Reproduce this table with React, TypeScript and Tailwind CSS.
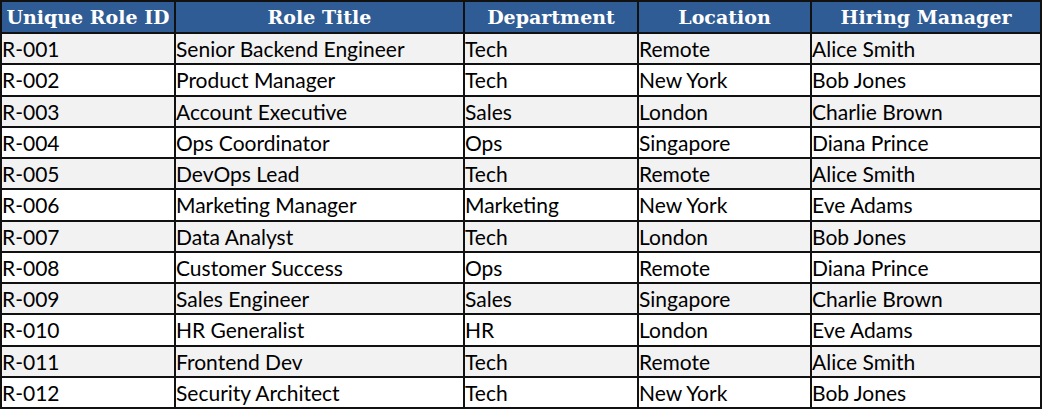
import React from 'react';

const rows = [
    ['R-001', 'Senior Backend Engineer', 'Tech', 'Remote', 'Alice Smith'],
    ['R-002', 'Product Manager', 'Tech', 'New York', 'Bob Jones'],
    ['R-003', 'Account Executive', 'Sales', 'London', 'Charlie Brown'],
    ['R-004', 'Ops Coordinator', 'Ops', 'Singapore', 'Diana Prince'],
    ['R-005', 'DevOps Lead', 'Tech', 'Remote', 'Alice Smith'],
    ['R-006', 'Marketing Manager', 'Marketing', 'New York', 'Eve Adams'],
    ['R-007', 'Data Analyst', 'Tech', 'London', 'Bob Jones'],
    ['R-008', 'Customer Success', 'Ops', 'Remote', 'Diana Prince'],
    ['R-009', 'Sales Engineer', 'Sales', 'Singapore', 'Charlie Brown'],
    ['R-010', 'HR Generalist', 'HR', 'London', 'Eve Adams'],
    ['R-011', 'Frontend Dev', 'Tech', 'Remote', 'Alice Smith'],
    ['R-012', 'Security Architect', 'Tech', 'New York', 'Bob Jones'],
];

const headers = ['Unique Role ID', 'Role Title', 'Department', 'Location', 'Hiring Manager'];
const widths = ['w-[174px]', 'w-[289px]', 'w-[174px]', 'w-[173px]', 'w-[230px]'];

export default function App() {
    return (
        <div className="w-[1043px] h-[409px] bg-white">
            <table className="border-collapse table-fixed w-[1041px]">
                <colgroup>
                    {widths.map((w, i) => (
                        <col key={i} className={w} />
                    ))}
                </colgroup>
                <thead>
                    <tr className="h-[32px] bg-[#2f5c94]">
                        {headers.map(h => (
                            <th
                                key={h}
                                className="border-2 border-[#111] p-0 text-center text-white font-bold text-[19px] leading-none whitespace-nowrap font-['DejaVu_Serif',serif]"
                            >
                                {h}
                            </th>
                        ))}
                    </tr>
                </thead>
                <tbody>
                    {rows.map((r, i) => (
                        <tr key={r[0]} className={`h-[31.25px] ${i % 2 === 0 ? 'bg-[#f2f2f2]' : 'bg-white'}`}>
                            {r.map((c, j) => (
                                <td
                                    key={j}
                                    className="border-2 border-[#111] p-0 text-left text-black text-[21px] leading-none whitespace-nowrap font-['Lato',sans-serif]"
                                >
                                    {c}
                                </td>
                            ))}
                        </tr>
                    ))}
                </tbody>
            </table>
        </div>
    );
}
